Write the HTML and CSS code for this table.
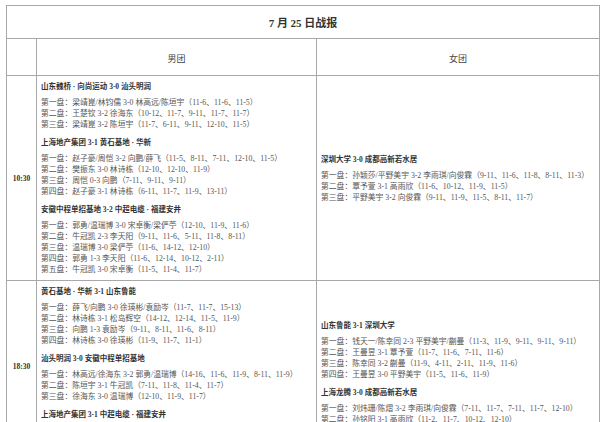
FILE: index.html
```html
<!DOCTYPE html>
<html lang="zh-CN">
<head>
<meta charset="utf-8">
<title>7 月 25 日战报</title>
<link rel="stylesheet" href="styles.css">
</head>
<body>
<table class="report">
  <colgroup>
    <col class="c-time">
    <col class="c-men">
    <col class="c-women">
  </colgroup>
  <tr>
    <th colspan="3" class="title">7 月 25 日战报</th>
  </tr>
  <tr>
    <th class="head"></th>
    <th class="head">男团</th>
    <th class="head">女团</th>
  </tr>
  <tr>
    <td class="time">10:30</td>
    <td class="games">
      <div class="match">
        <div class="team">山东魏桥 · 向尚运动 3-0 汕头明润</div>
        <div class="sets">
          <div>第一盘：梁靖崑/林钧儒 3-0 林高远/陈垣宇（11-6、11-6、11-5）</div>
          <div>第二盘：王楚钦 3-2 徐海东（10-12、11-7、9-11、11-7、11-7）</div>
          <div>第三盘：梁靖崑 3-2 陈垣宇（11-7、6-11、9-11、12-10、11-5）</div>
        </div>
      </div>
      <div class="match">
        <div class="team">上海地产集团 3-1 黄石基地 · 华新</div>
        <div class="sets">
          <div>第一盘：赵子豪/周恺 3-2 向鹏/薛飞（11-5、8-11、7-11、12-10、11-5）</div>
          <div>第二盘：樊振东 3-0 林诗栋（12-10、12-10、11-9）</div>
          <div>第三盘：周恺 0-3 向鹏（7-11、9-11、9-11）</div>
          <div>第四盘：赵子豪 3-1 林诗栋（6-11、11-7、11-9、13-11）</div>
        </div>
      </div>
      <div class="match">
        <div class="team">安徽中程单招基地 3-2 中超电缆 · 福建安井</div>
        <div class="sets">
          <div>第一盘：郭勇/温瑞博 3-0 宋卓衡/梁俨苧（12-10、11-9、11-6）</div>
          <div>第二盘：牛冠凯 2-3 李天阳（9-11、11-6、5-11、11-8、8-11）</div>
          <div>第三盘：温瑞博 3-0 梁俨苧（11-6、14-12、12-10）</div>
          <div>第四盘：郭勇 1-3 李天阳（11-6、12-14、10-12、2-11）</div>
          <div>第五盘：牛冠凯 3-0 宋卓衡（11-5、11-4、11-7）</div>
        </div>
      </div>
    </td>
    <td class="games">
      <div class="match">
        <div class="team">深圳大学 3-0 成都高新若水居</div>
        <div class="sets">
          <div>第一盘：孙颖莎/平野美宇 3-2 李雨琪/向俊霖（9-11、11-6、11-8、8-11、11-3）</div>
          <div>第二盘：覃予萱 3-1 高雨欣（11-6、10-12、11-9、11-5）</div>
          <div>第三盘：平野美宇 3-2 向俊霖（9-11、11-9、11-5、8-11、11-7）</div>
        </div>
      </div>
    </td>
  </tr>
  <tr>
    <td class="time time-late">18:30</td>
    <td class="games">
      <div class="match">
        <div class="team">黄石基地 · 华新 3-1 山东鲁能</div>
        <div class="sets">
          <div>第一盘：薛飞/向鹏 3-0 徐瑛彬/袁励岑（11-7、11-7、15-13）</div>
          <div>第二盘：林诗栋 3-1 松岛辉空（14-12、12-14、11-5、11-9）</div>
          <div>第三盘：向鹏 1-3 袁励岑（9-11、8-11、11-6、8-11）</div>
          <div>第四盘：林诗栋 3-0 徐瑛彬（11-9、11-7、11-1）</div>
        </div>
      </div>
      <div class="match">
        <div class="team">汕头明润 3-0 安徽中程单招基地</div>
        <div class="sets">
          <div>第一盘：林高远/徐海东 3-2 郭勇/温瑞博（14-16、11-6、11-9、8-11、11-9）</div>
          <div>第二盘：陈垣宇 3-1 牛冠凯（7-11、11-8、11-4、11-7）</div>
          <div>第三盘：徐海东 3-0 温瑞博（12-10、11-9、11-7）</div>
        </div>
      </div>
      <div class="match">
        <div class="team">上海地产集团 3-1 中超电缆 · 福建安井</div>
        <div class="sets">
          <div>第一盘：许昕/周恺 3-0 梁俨苧/宋卓衡（11-7、11-7、11-6）</div>
          <div>第二盘：樊振东 3-1 李天阳（11-8、9-11、11-7、11-5）</div>
          <div>第三盘：赵子豪 1-3 牛冠凯（8-11、11-9、7-11、9-11）</div>
          <div>第四盘：樊振东 3-0 牛冠凯（11-6、11-8、11-4）</div>
        </div>
      </div>
    </td>
    <td class="games">
      <div class="match">
        <div class="team">山东鲁能 3-1 深圳大学</div>
        <div class="sets">
          <div>第一盘：钱天一/陈幸同 2-3 平野美宇/蒯曼（11-3、11-9、9-11、9-11、9-11）</div>
          <div>第二盘：王曼昱 3-1 覃予萱（11-7、11-6、7-11、11-6）</div>
          <div>第三盘：陈幸同 3-2 蒯曼（11-9、4-11、2-11、11-9、11-6）</div>
          <div>第四盘：王曼昱 3-0 平野美宇（11-5、11-6、11-9）</div>
        </div>
      </div>
      <div class="match">
        <div class="team">上海龙腾 3-0 成都高新若水居</div>
        <div class="sets">
          <div>第一盘：刘炜珊/陈熠 3-2 李雨琪/向俊霖（7-11、11-7、7-11、11-7、12-10）</div>
          <div>第二盘：孙铭阳 3-1 高雨欣（11-2、11-7、10-12、12-10）</div>
          <div>第三盘：陈熠 3-0 向俊霖（11-8、11-6、11-9）</div>
        </div>
      </div>
    </td>
  </tr>
</table>
</body>
</html>
```
FILE: styles.css
```css
html, body {
  margin: 0;
  padding: 0;
  background: #ffffff;
}
body {
  padding: 5px 0 0 6px;
  font-family: "Liberation Serif", "Noto Sans CJK SC", serif;
  color: #333333;
}
.report {
  border-collapse: collapse;
  table-layout: fixed;
  width: 593px;
}
.c-time { width: 30px; }
.c-men { width: 280px; }
.c-women { width: 283px; }
.report th,
.report td {
  border: 1px solid #a8a8a8;
  padding: 0;
}
.title {
  height: 32px;
  font-size: 11px;
  font-weight: bold;
  text-align: center;
  color: #333333;
}
.head {
  height: 33px;
  font-size: 9px;
  font-weight: normal;
  text-align: center;
  color: #444444;
  padding-top: 3px !important;
}
.time {
  text-align: center;
  vertical-align: middle;
  font-size: 7.5px;
  font-weight: bold;
  color: #333333;
}
.time-late {
  padding-bottom: 22px !important;
}
.games {
  vertical-align: middle;
  padding: 5px 4px !important;
}
.match {
  margin-bottom: 7px;
}
.match:last-child {
  margin-bottom: 0;
}
.team {
  font-size: 7.5px;
  line-height: 11px;
  font-weight: bold;
  color: #333333;
  margin-bottom: 5px;
  white-space: nowrap;
}
.sets {
  font-size: 7.8px;
  line-height: 11px;
  color: #555555;
  white-space: nowrap;
}
```
